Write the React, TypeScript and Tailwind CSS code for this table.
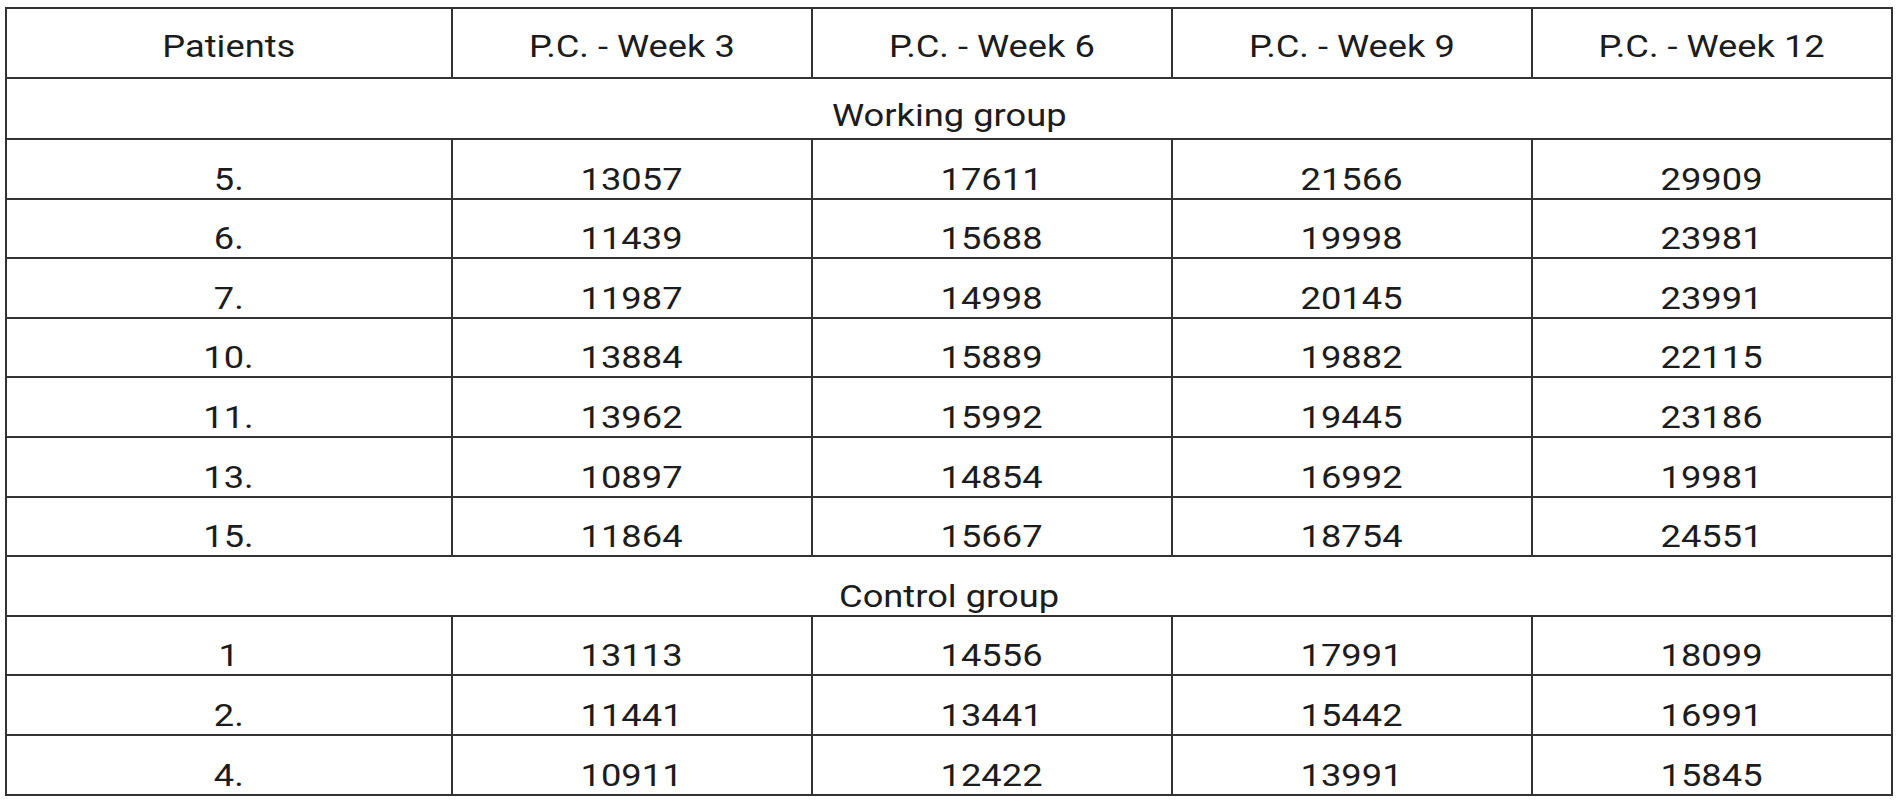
const header = ["Patients", "P.C. - Week 3", "P.C. - Week 6", "P.C. - Week 9", "P.C. - Week 12"];

const working = [
  ["5.", "13057", "17611", "21566", "29909"],
  ["6.", "11439", "15688", "19998", "23981"],
  ["7.", "11987", "14998", "20145", "23991"],
  ["10.", "13884", "15889", "19882", "22115"],
  ["11.", "13962", "15992", "19445", "23186"],
  ["13.", "10897", "14854", "16992", "19981"],
  ["15.", "11864", "15667", "18754", "24551"],
];

const control = [
  ["1", "13113", "14556", "17991", "18099"],
  ["2.", "11441", "13441", "15442", "16991"],
  ["4.", "10911", "12422", "13991", "15845"],
];

// the source image is a bit wider than tall, so the glyphs are stretched sideways
const cell = "flex items-end justify-center border-r-2 border-b-2 border-[#333333] leading-[31px]";
const txt = "inline-block scale-x-[1.17] whitespace-nowrap";

const DataRows = ({ rows }: { rows: string[][] }) => (
  <>
    {rows.map((row, r) =>
      row.map((v, c) => (
        <div key={`${r}-${c}`} className={`${cell} h-[59.6px] pb-[3px]`}>
          <span className={txt}>{v}</span>
        </div>
      ))
    )}
  </>
);

export default function App() {
  return (
    <div className="min-h-screen bg-white pl-[5px] pt-[7px] text-[31px] text-[#1c1c1c] font-['Roboto',sans-serif]">
      <div className="grid w-fit grid-cols-[446px_repeat(4,360px)] border-l-2 border-t-2 border-[#333333]">
        {header.map((h) => (
          <div key={h} className={`${cell} h-[70px] pb-[15px]`}>
            <span className={txt}>{h}</span>
          </div>
        ))}
        <div className={`${cell} col-span-5 h-[61px] pb-[7px]`}>
          <span className={txt}>Working group</span>
        </div>
        <DataRows rows={working} />
        <div className={`${cell} col-span-5 h-[59.6px] pb-[3px]`}>
          <span className={txt}>Control group</span>
        </div>
        <DataRows rows={control} />
      </div>
    </div>
  );
}
